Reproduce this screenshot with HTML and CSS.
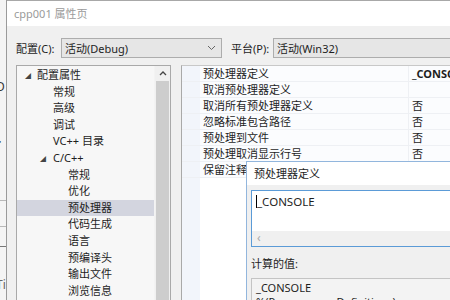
FILE: index.html
```html
<!DOCTYPE html>
<html lang="zh-CN">
<head>
    <meta charset="UTF-8">
    <title>cpp001 属性页</title>
    <link rel="stylesheet" href="styles.css">
</head>
<body>
    <div class="desk">
        <!-- window behind the dialog -->
        <div class="bgwin">
            <span class="frag f1">D</span>
            <span class="frag f2">ï</span>
            <span class="rule r1"></span>
            <span class="rule r2"></span>
            <span class="rule r3"></span>
            <span class="frag f3">Ti</span>
        </div>

        <div class="dialog">
            <div class="titlebar">cpp001 属性页</div>
            <div class="body">
                <div class="configrow">
                    <span class="label">配置(C):</span>
                    <div class="combo combo-config">
                        <span>活动(Debug)</span>
                        <svg class="chev" width="9" height="6" viewBox="0 0 9 6"><path d="M1 1 L4.5 4.5 L8 1" fill="none" stroke="#666" stroke-width="1"/></svg>
                    </div>
                    <span class="label label-platform">平台(P):</span>
                    <div class="combo combo-platform">
                        <span>活动(Win32)</span>
                    </div>
                </div>

                <div class="main">
                    <div class="tree">
                        <ul class="items">
                            <li class="lvl0"><i class="tog">◢</i>配置属性</li>
                            <li class="lvl1">常规</li>
                            <li class="lvl1">高级</li>
                            <li class="lvl1">调试</li>
                            <li class="lvl1">VC++ 目录</li>
                            <li class="lvl1"><i class="tog">◢</i>C/C++</li>
                            <li class="lvl2">常规</li>
                            <li class="lvl2">优化</li>
                            <li class="lvl2 selected">预处理器</li>
                            <li class="lvl2">代码生成</li>
                            <li class="lvl2">语言</li>
                            <li class="lvl2">预编译头</li>
                            <li class="lvl2">输出文件</li>
                            <li class="lvl2">浏览信息</li>
                        </ul>
                        <div class="vscroll">
                            <div class="arrow">
                                <svg width="8" height="5" viewBox="0 0 8 5"><path d="M1 4 L4 1 L7 4" fill="none" stroke="#444" stroke-width="1.3"/></svg>
                            </div>
                            <div class="thumb"></div>
                        </div>
                    </div>

                    <div class="grid">
                        <div class="row"><span class="name">预处理器定义</span><span class="value bold">_CONSOLE;%(PreprocessorDefinitions)</span></div>
                        <div class="row"><span class="name">取消预处理器定义</span><span class="value"></span></div>
                        <div class="row"><span class="name">取消所有预处理器定义</span><span class="value">否</span></div>
                        <div class="row"><span class="name">忽略标准包含路径</span><span class="value">否</span></div>
                        <div class="row"><span class="name">预处理到文件</span><span class="value">否</span></div>
                        <div class="row"><span class="name">预处理取消显示行号</span><span class="value">否</span></div>
                        <div class="row"><span class="name">保留注释</span><span class="value">否</span></div>
                        <div class="rest"></div>
                    </div>
                </div>
            </div>
        </div>

        <!-- edit popup over the property grid -->
        <div class="popup">
            <div class="popup-title">预处理器定义</div>
            <div class="popup-body">
                <div class="editbox">
                    <div class="edit-text"><span class="caret"></span>_CONSOLE</div>
                    <div class="hscroll">‹</div>
                </div>
                <div class="calc-label">计算的值:</div>
                <div class="calcbox">
                    <div>_CONSOLE</div>
                    <div>%(PreprocessorDefinitions)</div>
                </div>
            </div>
        </div>
    </div>
</body>
</html>
```

FILE: styles.css
```css
body {
    margin: 0;
    padding: 0;
    overflow: hidden;
    font-family: "Noto Sans", "Noto Sans CJK SC", sans-serif;
    font-size: 11px;
    color: #1e1e1e;
    background: #fff;
}
.desk {
    position: relative;
    display: flex;
    width: 450px;
    height: 300px;
    overflow: hidden;
}

/* background window strip */
.bgwin {
    position: relative;
    width: 6px;
    flex: none;
    background: #f4f4f4;
    border-right: 1px solid #9a9a9a;
    overflow: hidden;
}
.frag {
    position: absolute;
    left: -4px;
    font-size: 12px;
    color: #333;
}
.f1 { top: 78px; }
.f2 { top: 138px; font-style: italic; font-weight: bold; }
.f3 { top: 276px; color: #666; }
.rule {
    position: absolute;
    left: 0;
    width: 6px;
    height: 1px;
    background: #b8b8b8;
}
.r1 { top: 200px; }
.r2 { top: 226px; }
.r3 { top: 246px; background: #777; }

/* dialog */
.dialog {
    flex: 1;
    display: flex;
    flex-direction: column;
    border-top: 1px solid #a8a8a8;
    background: #f0f0f0;
}
.titlebar {
    height: 25px;
    line-height: 25px;
    padding-left: 7px;
    background: #fff;
    color: #9a9a9a;
    font-size: 11px;
}
.body {
    flex: 1;
    display: flex;
    flex-direction: column;
    padding: 11px 0 0 9px;
    min-height: 0;
}
.configrow {
    display: flex;
    align-items: center;
    height: 22px;
}
.label {
    width: 45px;
    flex: none;
}
.label-platform {
    width: 42px;
    margin-left: 9px;
}
.combo {
    height: 20px;
    box-sizing: border-box;
    border: 1px solid #adadad;
    background: #e6e6e6;
    display: flex;
    align-items: center;
    padding-left: 3px;
}
.combo-config {
    width: 161px;
    justify-content: space-between;
    padding-right: 5px;
}
.combo-platform {
    flex: 1;
    border-right: none;
}

.main {
    flex: 1;
    display: flex;
    gap: 10px;
    margin-top: 6px;
    min-height: 0;
}

/* tree */
.tree {
    width: 153px;
    flex: none;
    display: flex;
    border: 1px solid #a9a9a9;
    border-bottom: none;
    background: #f7f7f7;
}
.items {
    flex: 1;
    list-style: none;
    margin: 0;
    padding: 1px 0 0;
}
.items li {
    height: 16.6px;
    line-height: 16.6px;
    white-space: nowrap;
    position: relative;
}
.tog {
    position: absolute;
    font-style: normal;
    font-size: 6px;
    color: #444;
    top: 1px;
}
.lvl0 { padding-left: 20px; }
.lvl0 .tog { left: 8px; }
.lvl1 { padding-left: 36px; }
.lvl1 .tog { left: 23px; }
.lvl2 { padding-left: 51px; }
.selected { background: #d3d5df; }
.vscroll {
    width: 15px;
    display: flex;
    flex-direction: column;
    background: #f0f0f0;
    border-left: 1px solid #f3f3f3;
}
.arrow {
    height: 15px;
    display: flex;
    align-items: center;
    justify-content: center;
}
.thumb {
    flex: 1;
    margin: 0 1px;
    background: #cdcdcd;
}

/* property grid */
.grid {
    flex: 1;
    border-left: 1px solid #a9a9a9;
    border-top: 1px solid #c8c8c8;
    background: #fff;
    display: flex;
    flex-direction: column;
}
.row {
    display: flex;
    height: 16px;
    line-height: 16px;
    border-bottom: 1px solid #eef0f4;
    box-sizing: border-box;
    background: #fbfcfe;
}
.name {
    width: 227px;
    flex: none;
    box-sizing: border-box;
    border-left: 18px solid #f2f5fb;
    padding-left: 3px;
    border-right: 1px solid #eef0f4;
    white-space: nowrap;
}
.value {
    flex: 1;
    padding-left: 3px;
    white-space: nowrap;
    overflow: hidden;
}
.bold { font-weight: bold; }
.rest {
    flex: 1;
    border-left: 18px solid #f2f5fb;
}

/* popup edit window */
.popup {
    position: absolute;
    left: 246px;
    top: 161px;
    width: 210px;
    height: 145px;
    border: 1px solid #92b6dd;
    background: #f0f0f0;
    display: flex;
    flex-direction: column;
}
.popup-title {
    height: 25px;
    line-height: 23px;
    padding-left: 7px;
    background: #fff;
}
.popup-body {
    padding: 5px 0 0 4px;
}
.editbox {
    height: 57px;
    box-sizing: border-box;
    border: 1px solid #5b9bd7;
    border-right: none;
    background: #fff;
    display: flex;
    flex-direction: column;
}
.edit-text {
    flex: 1;
    padding: 4px 0 0 4px;
    font-size: 11.5px;
    line-height: 14px;
}
.caret {
    display: inline-block;
    width: 1px;
    height: 13px;
    background: #000;
    vertical-align: -2px;
}
.hscroll {
    height: 15px;
    line-height: 14px;
    background: #f0f0f0;
    color: #aaa;
    padding-left: 5px;
    font-size: 12px;
}
.calc-label {
    margin-top: 9px;
    height: 16px;
    line-height: 16px;
}
.calcbox {
    margin-top: 6px;
    border: 1px solid #c4c4c4;
    border-right: none;
    padding: 2px 0 0 4px;
    line-height: 14px;
    font-size: 11px;
    background: #f3f3f3;
}
```
